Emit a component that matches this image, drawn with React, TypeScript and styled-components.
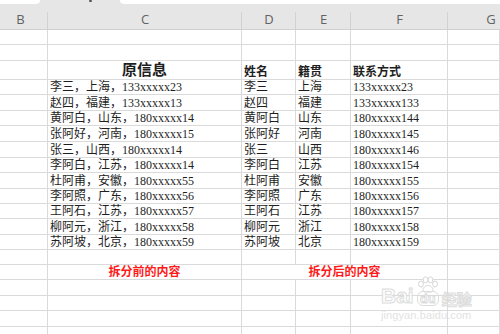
import React from "react";
import styled, { createGlobalStyle } from "styled-components";

const COLS = "48px 194px 54px 55px 97px 52px";
const GRID = "#dadada";

const GlobalStyle = createGlobalStyle`
  html, body { margin: 0; padding: 0; background: #ffffff; }
  body { overflow: hidden; }
`;

const Sheet = styled.div`
  position: relative;
  width: 500px;
  height: 334px;
  overflow: hidden;
  background: #ffffff;
  font-family: "Liberation Serif", "Noto Sans CJK SC", serif;
`;

const TopStrip = styled.div`
  display: flex;
  height: 4px;
  background: #e6e6e6;
`;

const WhiteTab = styled.div<{ $side: "left" | "right" }>`
  background: #ffffff;
  flex: ${(p) => (p.$side === "left" ? "0 0 40px" : "1 1 auto")};
  border-bottom-right-radius: ${(p) => (p.$side === "left" ? "4px" : "0")};
  border-bottom-left-radius: ${(p) => (p.$side === "right" ? "4px" : "0")};
`;

const GreyTab = styled.div`
  flex: 0 0 80px;
  display: flex;
  justify-content: center;
`;

const TabMark = styled.div`
  width: 3px;
  height: 2px;
  margin-left: 20px;
  background: #555;
  border-radius: 1px;
`;

const HeaderRow = styled.div`
  display: grid;
  grid-template-columns: ${COLS};
  height: 26px;
  box-sizing: border-box;
  background: #e6e6e6;
  border-bottom: 1px solid #cfcfcf;
`;

const HeaderCell = styled.div<{ $pl?: number; $pr?: number; $last?: boolean }>`
  position: relative;
  display: flex;
  align-items: flex-end;
  justify-content: center;
  padding-bottom: 2px;
  padding-left: ${(p) => p.$pl ?? 0}px;
  padding-right: ${(p) => p.$pr ?? 0}px;
  font-family: "Open Sans", "Liberation Sans", sans-serif;
  font-size: 13px;
  color: #626262;
  line-height: 16px;
  &::after {
    content: "";
    display: ${(p) => (p.$last ? "none" : "block")};
    position: absolute;
    top: 8px;
    bottom: 0;
    right: 0;
    width: 1px;
    background: #d2d2d2;
  }
`;

const Row = styled.div<{ $h: number }>`
  display: grid;
  grid-template-columns: ${COLS};
  height: ${(p) => p.$h}px;
`;

const Cell = styled.div<{
  $span?: number;
  $align?: "left" | "center";
  $bold?: boolean;
  $size?: number;
  $red?: boolean;
}>`
  grid-column: span ${(p) => p.$span ?? 1};
  box-sizing: border-box;
  display: flex;
  align-items: flex-end;
  justify-content: ${(p) => (p.$align === "center" ? "center" : "flex-start")};
  padding-left: ${(p) => (p.$align === "center" ? 0 : 2)}px;
  padding-bottom: 0;
  border-right: 1px solid ${GRID};
  border-bottom: 1px solid ${GRID};
  font-size: ${(p) => p.$size ?? 12}px;
  line-height: ${(p) => (p.$size ?? 12) + 2}px;
  font-weight: ${(p) => (p.$bold ? 700 : 400)};
  color: ${(p) => (p.$red ? "#ff1a1a" : "#1e1e1e")};
  white-space: nowrap;
  overflow: visible;
`;

const Watermark = styled.div`
  position: absolute;
  left: 381px;
  top: 276px;
  display: flex;
  flex-direction: column;
  align-items: flex-start;
  pointer-events: none;
`;

const LogoLine = styled.div`
  display: flex;
  align-items: flex-end;
  gap: 2px;
`;

const OutlineText = styled.span<{ $size: number; $cjk?: boolean }>`
  font-family: ${(p) =>
    p.$cjk ? '"Noto Sans CJK SC", sans-serif' : '"Liberation Sans", sans-serif'};
  font-weight: 700;
  font-size: ${(p) => p.$size}px;
  line-height: ${(p) => p.$size}px;
  color: rgba(255, 255, 255, 0.9);
  -webkit-text-stroke: 1px #dcdcdc;
`;

const DuMark = styled.div`
  display: flex;
  flex-direction: column;
  align-items: center;
  width: 24px;
`;

const DuBox = styled.div`
  border: 1px solid #dcdcdc;
  border-radius: 6px;
  padding: 0 2px;
  margin-top: -2px;
  font-family: "Liberation Sans", sans-serif;
  font-weight: 700;
  font-size: 13px;
  line-height: 13px;
  color: #ffffff;
  -webkit-text-stroke: 0.8px #d6d6d6;
`;

const UrlText = styled.div`
  font-family: "Liberation Sans", sans-serif;
  font-size: 11px;
  line-height: 12px;
  margin-top: 3px;
  color: #e2e2e2;
  letter-spacing: 0.1px;
`;

const data: [string, string, string, string][] = [
  ["李三，上海，133xxxxx23", "李三", "上海", "133xxxxx23"],
  ["赵四，福建，133xxxxx13", "赵四", "福建", "133xxxxx133"],
  ["黄阿白，山东，180xxxxx14", "黄阿白", "山东", "180xxxxx144"],
  ["张阿好，河南，180xxxxx15", "张阿好", "河南", "180xxxxx145"],
  ["张三，山西，180xxxxx14", "张三", "山西", "180xxxxx146"],
  ["李阿白，江苏，180xxxxx14", "李阿白", "江苏", "180xxxxx154"],
  ["杜阿甫，安徽，180xxxxx55", "杜阿甫", "安徽", "180xxxxx155"],
  ["李阿照，广东，180xxxxx56", "李阿照", "广东", "180xxxxx156"],
  ["王阿石，江苏，180xxxxx57", "王阿石", "江苏", "180xxxxx157"],
  ["柳阿元，浙江，180xxxxx58", "柳阿元", "浙江", "180xxxxx158"],
  ["苏阿坡，北京，180xxxxx59", "苏阿坡", "北京", "180xxxxx159"],
];

const heights = [15, 16, 19, 15, 16, 15, 16, 16, 15, 16, 15, 15, 16, 15, 15, 15, 16, 15, 16, 15];

const EmptyRow: React.FC<{ h: number }> = ({ h }) => (
  <Row $h={h}>
    <Cell />
    <Cell />
    <Cell />
    <Cell />
    <Cell />
    <Cell />
  </Row>
);

const Paw: React.FC = () => (
  <svg width="22" height="17" viewBox="0 0 22 17" fill="#fff" stroke="#d8d8d8" strokeWidth="1">
    <ellipse cx="4" cy="8" rx="2.4" ry="3" />
    <ellipse cx="8.5" cy="3.8" rx="2.4" ry="3" />
    <ellipse cx="13.5" cy="3.8" rx="2.4" ry="3" />
    <ellipse cx="18" cy="8" rx="2.4" ry="3" />
    <path d="M6 15 C6 11 9 9.5 11 9.5 C13 9.5 16 11 16 15 C16 16.5 6 16.5 6 15 Z" />
  </svg>
);

export default function App() {
  return (
    <Sheet>
      <GlobalStyle />
      <TopStrip>
        <WhiteTab $side="left" />
        <GreyTab>
          <TabMark />
        </GreyTab>
        <WhiteTab $side="right" />
      </TopStrip>
      <HeaderRow>
        <HeaderCell $pr={7}>B</HeaderCell>
        <HeaderCell>C</HeaderCell>
        <HeaderCell>D</HeaderCell>
        <HeaderCell>E</HeaderCell>
        <HeaderCell>F</HeaderCell>
        <HeaderCell $pl={34} $last>G</HeaderCell>
      </HeaderRow>

      <EmptyRow h={heights[0]} />
      <EmptyRow h={heights[1]} />
      <Row $h={heights[2]}>
        <Cell />
        <Cell $align="center" $bold $size={15}>原信息</Cell>
        <Cell $bold>姓名</Cell>
        <Cell $bold>籍贯</Cell>
        <Cell $bold>联系方式</Cell>
        <Cell />
      </Row>
      {data.map((r, i) => (
        <Row key={i} $h={heights[3 + i]}>
          <Cell />
          <Cell>{r[0]}</Cell>
          <Cell>{r[1]}</Cell>
          <Cell>{r[2]}</Cell>
          <Cell>{r[3]}</Cell>
          <Cell />
        </Row>
      ))}
      <EmptyRow h={heights[14]} />
      <Row $h={heights[15]}>
        <Cell />
        <Cell $align="center" $bold $red>拆分前的内容</Cell>
        <Cell $span={3} $align="center" $bold $red>拆分后的内容</Cell>
        <Cell />
      </Row>
      {heights.slice(16).map((h, i) => (
        <EmptyRow key={i} h={h} />
      ))}

      <Watermark>
        <LogoLine>
          <OutlineText $size={21}>Bai</OutlineText>
          <DuMark>
            <Paw />
            <DuBox>du</DuBox>
          </DuMark>
          <OutlineText $size={15} $cjk>经验</OutlineText>
        </LogoLine>
        <UrlText>jingyan.baidu.com</UrlText>
      </Watermark>
    </Sheet>
  );
}
